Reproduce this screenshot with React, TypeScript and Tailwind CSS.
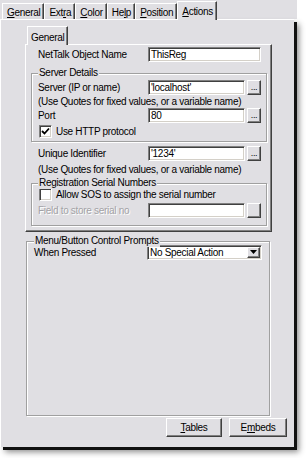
import React from "react";

const FACE = "bg-[#e0dfe3]";

type TabProps = { label: React.ReactNode; active?: boolean };

function Tab({ label, active = false }: TabProps) {
  if (active) {
    return (
      <div className="relative z-10 -mb-px flex h-[19px] items-start border-l border-t border-r border-white border-r-[#404040] bg-[#e0dfe3] pl-[4px] pr-[3px] pt-[2px] shadow-[inset_-1px_0_0_#808080]">
        {label}
      </div>
    );
  }
  return (
    <div className="flex h-[16px] items-start border-l border-t border-r border-white border-r-[#404040] pl-[4px] pr-[3px] pt-[1px] shadow-[inset_-1px_0_0_#808080]">
      {label}
    </div>
  );
}

function Field({ value, w }: { value?: string; w: string }) {
  return (
    <div
      className={`flex h-[15px] ${w} items-center border border-[#808080] border-b-white border-r-white bg-white pl-[2px] shadow-[inset_1px_1px_0_#404040,inset_-1px_-1px_0_#d4d0c8]`}
    >
      {value}
    </div>
  );
}

function Dots({ disabled = false }: { disabled?: boolean }) {
  return (
    <div className="ml-[2px] flex h-[15px] w-[14px] items-end justify-center border border-white border-b-[#404040] border-r-[#404040] bg-[#e0dfe3] pb-[2px] text-[9px] leading-none shadow-[inset_-1px_-1px_0_#808080]">
      {disabled ? "" : "..."}
    </div>
  );
}

function Check({ checked }: { checked: boolean }) {
  return (
    <div className="flex h-[13px] w-[13px] items-center justify-center border border-[#808080] border-b-white border-r-white bg-white shadow-[inset_1px_1px_0_#404040,inset_-1px_-1px_0_#d4d0c8]">
      {checked ? (
        <svg width="9" height="9" viewBox="0 0 9 9">
          <path d="M1 4 L3.5 6.5 L8 1.5" stroke="#000" strokeWidth="1.8" fill="none" />
        </svg>
      ) : null}
    </div>
  );
}

function Row({
  label,
  children,
  className = "",
  labelClass = "",
}: {
  label: string;
  children: React.ReactNode;
  className?: string;
  labelClass?: string;
}) {
  return (
    <div className={`flex items-center ${className}`}>
      <span className={`w-[110px] shrink-0 ${labelClass}`}>{label}</span>
      {children}
    </div>
  );
}

function Group({ title, children, className = "" }: { title: string; children: React.ReactNode; className?: string }) {
  return (
    <fieldset
      className={`border border-[#a0a0a0] pl-[6px] shadow-[inset_1px_1px_0_#fff,1px_1px_0_#fff] ${className}`}
    >
      <legend className="relative bg-[#e0dfe3] px-px leading-[12px]">{title}</legend>
      {children}
    </fieldset>
  );
}

export default function App() {
  return (
    <div className="h-[458px] w-[308px] overflow-hidden bg-white font-['Liberation_Sans',Arial,sans-serif] text-[10px] tracking-[-0.3px] text-black">
      <div className={`flex h-[19px] w-[297px] items-end pl-[2px] ${FACE}`}>
        <Tab label={<span><u>G</u>eneral</span>} />
        <Tab label={<span>Ext<u>r</u>a</span>} />
        <Tab label={<span><u>C</u>olor</span>} />
        <Tab label={<span>He<u>l</u>p</span>} />
        <Tab label={<span><u>P</u>osition</span>} />
        <Tab label={<span><u>A</u>ctions</span>} active />
      </div>

      <div className={`flex h-[428px] w-[294px] flex-col border-l border-t border-white pl-[24px] pt-[5px] shadow-[3px_3px_0_#111,5px_5px_6px_rgba(0,0,0,0.45)] ${FACE}`}>
        {/* inner tab */}
        <div className="flex h-[19px] items-end pl-[2px]">
          <div className="relative z-10 -mb-px flex h-[19px] items-start border-l border-t border-r border-white border-r-[#404040] bg-[#e0dfe3] px-[3px] pt-[3px] shadow-[inset_-1px_0_0_#808080]">
            General
          </div>
        </div>

        <div className="flex h-[188px] w-[247px] flex-col border border-white border-b-[#404040] border-r-[#404040] shadow-[inset_-1px_-1px_0_#808080]">
          <Row label="NetTalk Object Name" className="ml-[12px] mt-[2px]">
            <Field value="ThisReg" w="w-[113px]" />
          </Row>

          <Group title="Server Details" className="ml-[5px] mr-[4px] mt-[5px] pb-[2px]">
            <Row label="Server (IP or name)" className="mt-px">
              <Field value="'localhost'" w="w-[97px]" />
              <Dots />
            </Row>
            <div className="mt-px h-[12px] leading-[12px]">(Use Quotes for fixed values, or a variable name)</div>
            <Row label="Port">
              <Field value="80" w="w-[97px]" />
              <Dots />
            </Row>
            <div className="mt-px flex items-center gap-[4px] pl-px">
              <Check checked />
              <span>Use HTTP protocol</span>
            </div>
          </Group>

          <Row label="Unique Identifier" className="ml-[12px] mt-[4px]">
            <Field value="'1234'" w="w-[97px]" />
            <Dots />
          </Row>
          <div className="ml-[12px] mt-[3px] h-[12px] leading-[12px]">(Use Quotes for fixed values, or a variable name)</div>

          <Group title="Registration Serial Numbers" className="ml-[5px] mr-[4px] mt-px pb-[7px]">
            <div className="-mt-[2px] flex items-center gap-[4px] pl-px">
              <Check checked={false} />
              <span>Allow SOS to assign the serial number</span>
            </div>
            <Row
              label="Field to store serial no"
              className="mt-px"
              labelClass="text-[#a3a2a6] [text-shadow:1px_1px_0_#fff]"
            >
              <Field w="w-[97px]" />
              <Dots disabled />
            </Row>
          </Group>
        </div>

        <fieldset className="ml-px mt-[3px] h-[181px] w-[244px] border border-[#a0a0a0] pl-[7px] shadow-[inset_1px_1px_0_#fff,1px_1px_0_#fff]">
          <legend className="relative bg-[#e0dfe3] px-px leading-[12px]">Menu/Button Control Prompts</legend>
          <div className="-mt-[3px] flex items-center">
            <span className="w-[113px] shrink-0 pt-px">When Pressed</span>
            <div className="flex h-[15px] w-[115px] items-center justify-between border border-[#808080] border-b-white border-r-white bg-white pl-[2px] shadow-[inset_1px_1px_0_#404040,inset_-1px_-1px_0_#d4d0c8]">
              <span>No Special Action</span>
              <div className="mr-px flex h-[11px] w-[13px] items-center justify-center border border-white border-b-[#404040] border-r-[#404040] bg-[#e0dfe3] shadow-[inset_-1px_-1px_0_#808080]">
                <svg width="7" height="4" viewBox="0 0 7 4">
                  <path d="M0 0 H7 L3.5 4 Z" fill="#000" />
                </svg>
              </div>
            </div>
          </div>
        </fieldset>

        <div className="mt-[2px] flex gap-[7px] pl-[141px]">
          <div className="flex h-[19px] w-[56px] items-center justify-center border border-white border-b-[#404040] border-r-[#404040] shadow-[inset_-1px_-1px_0_#808080]">
            <span><u>T</u>ables</span>
          </div>
          <div className="flex h-[19px] w-[58px] items-center justify-center border border-white border-b-[#404040] border-r-[#404040] shadow-[inset_-1px_-1px_0_#808080]">
            <span>E<u>m</u>beds</span>
          </div>
        </div>
      </div>
    </div>
  );
}
